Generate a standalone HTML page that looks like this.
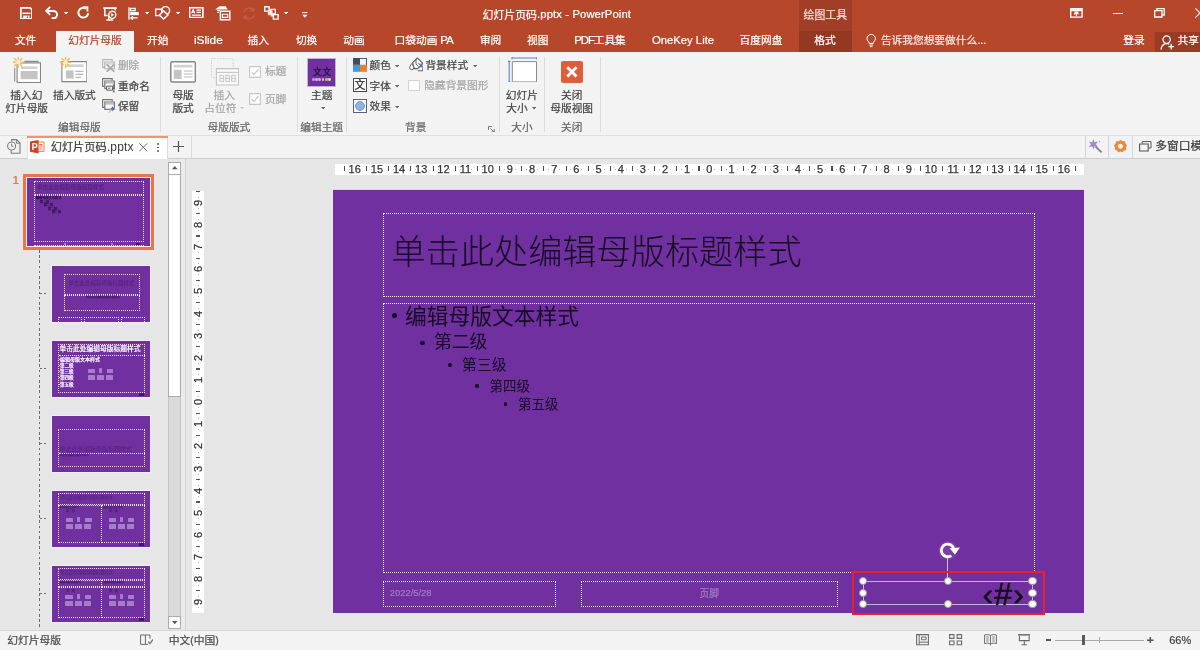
<!DOCTYPE html>
<html lang="zh-CN"><head><meta charset="utf-8"><title>幻灯片页码.pptx - PowerPoint</title>
<style>
*{box-sizing:border-box;margin:0;padding:0}
html,body{width:1200px;height:650px;overflow:hidden;background:#E6E6E6}
body{position:relative;font-family:"Liberation Sans","Noto Sans CJK SC",sans-serif;font-size:10.7px;color:#444}
div,svg.ic{position:absolute}
main{position:absolute;left:0;top:0;width:1200px;height:650px;overflow:hidden;will-change:transform}
.t{white-space:nowrap;line-height:1;height:1em;-webkit-text-stroke:.22px currentColor}
.t.c{transform:translateX(-50%)}
.sep{width:1px;background:#DCDCDC}
.dot{border:1px dotted #fff}

.rh,.rv{overflow:hidden;font-size:11px;color:#333;line-height:1;-webkit-text-stroke:.25px #333}
.rh span{position:absolute;top:.6px;transform:translateX(-50%)}
.rh b{position:absolute;top:2.9px;width:1.2px;height:5px;background:#4a4a4a}
.rh u{position:absolute;top:5.4px;width:1px;height:1px;background:#b4b4b4}
.rv span{position:absolute;left:5.9px;transform:translate(-50%,-50%) rotate(-90deg)}
.rv b{position:absolute;left:4.2px;height:1.2px;width:3.2px;background:#555}
.rv u{position:absolute;left:5.4px;width:1px;height:1px;background:#b4b4b4}
</style></head>
<body>
<main>
<div style="position:absolute;left:0px;top:0px;width:1200px;height:52px;background:#B7472A"></div>
<div style="position:absolute;left:799px;top:0px;width:53px;height:31px;background:#A03E27"></div>
<div style="position:absolute;left:799px;top:31px;width:53px;height:21px;background:#943821"></div>
<div style="position:absolute;left:1155px;top:31.5px;width:45px;height:20px;background:#9A3B25"></div>
<div style="position:absolute;left:56px;top:31px;width:78px;height:21.5px;background:#F3F3F3"></div>
<svg class="ic" style="left:19.6px;top:6.6px;" width="12.8" height="12.8" viewBox="0 0 12.8 12.8"><path d="M.9.9H10.2L11.9 2.6V11.9H.9Z" fill="none" stroke="#fff" stroke-width="1.7"/><path d="M2.4 6.3H10.4" stroke="#fff" stroke-width="1.5"/><path d="M3.2 8.6H9.6V11.9H3.2Z" fill="#fff"/><path d="M6.9 9.4H8.2V11H6.9Z" fill="#B7472A"/></svg>
<svg class="ic" style="left:44.6px;top:6.2px;" width="14.4" height="13" viewBox="0 0 14.4 13"><path d="M5.2 .9L1.2 4.9L5.2 8.9" fill="none" stroke="#fff" stroke-width="2"/><path d="M1.8 4.9H8.4A3.7 3.7 0 0 1 8.4 12.3H6.6" fill="none" stroke="#fff" stroke-width="2"/></svg>
<svg class="ic" style="left:64px;top:11.8px;" width="4.2" height="2.6" viewBox="0 0 4.2 2.6"><path d="M0 0H4.2L2.1 2.6Z" fill="#fff"/></svg>
<svg class="ic" style="left:76.6px;top:6.2px;" width="13" height="13.4" viewBox="0 0 13 13.4"><path d="M9 2.6A4.9 4.9 0 1 0 11.2 7.2" fill="none" stroke="#fff" stroke-width="2"/><path d="M5.8 1.2H10.4V5.6" fill="none" stroke="#fff" stroke-width="1.9"/></svg>
<svg class="ic" style="left:102.5px;top:6.5px;" width="14" height="14" viewBox="0 0 14 14"><path d="M.3 1.1H13.7" stroke="#fff" stroke-width="1.8"/><path d="M1.8 1.5V8.6H4.6M12.2 1.5V3.6" fill="none" stroke="#fff" stroke-width="1.5"/><circle cx="9.3" cy="7.8" r="3.6" fill="none" stroke="#fff" stroke-width="1.35"/><path d="M8.2 5.9L11.2 7.8L8.2 9.7Z" fill="#fff"/><path d="M5.7 8.7V12.6M3.4 13H10.2" stroke="#fff" stroke-width="1.35"/></svg>
<svg class="ic" style="left:127.5px;top:6.5px;" width="11.5" height="13" viewBox="0 0 11.5 13"><path d="M1 .3V12.8" stroke="#fff" stroke-width="1.3"/><path d="M2.6 1.4H7.2V3.6H2.6Z" fill="none" stroke="#fff" stroke-width="1.3"/><path d="M2.2 5H10.8V8.2H2.2Z" fill="#fff"/><path d="M4.9 9.2L2.9 10.9L4.9 12.6M3 10.9H9.6" fill="none" stroke="#fff" stroke-width="1.35"/></svg>
<svg class="ic" style="left:145px;top:11.8px;" width="4.2" height="2.6" viewBox="0 0 4.2 2.6"><path d="M0 0H4.2L2.1 2.6Z" fill="#fff"/></svg>
<svg class="ic" style="left:155px;top:6px;" width="15.5" height="13.5" viewBox="0 0 15.5 13.5"><path d="M.6 3.2H7V9.6H.6Z" fill="none" stroke="#fff" stroke-width="1.45"/><circle cx="10.6" cy="4.6" r="4" fill="none" stroke="#fff" stroke-width="1.45"/><path d="M8.6 4.9L13 9L8.6 13L4.3 9Z" fill="#B7472A" stroke="#fff" stroke-width="1.45"/></svg>
<svg class="ic" style="left:176px;top:11.8px;" width="4.2" height="2.6" viewBox="0 0 4.2 2.6"><path d="M0 0H4.2L2.1 2.6Z" fill="#fff"/></svg>
<svg class="ic" style="left:189px;top:7.3px;" width="14.5" height="11.2" viewBox="0 0 14.5 11.2"><path d="M.6.6H13.9V10.6H.6Z" fill="none" stroke="#fff" stroke-width="1.6"/><path d="M2.6 6.4L4.2 2.5L5.8 6.4M3.2 5.1H5.2M7.4 3.2H12M7.4 5.4H12M2.8 8.2H12" fill="none" stroke="#fff" stroke-width="1.15"/></svg>
<svg class="ic" style="left:215px;top:6px;" width="15.5" height="14.5" viewBox="0 0 15.5 14.5"><path d="M.2 3.4L4.4 .3H10.6L12.6 3.4Z" fill="#fff"/><path d="M2 4.6H5.2M2 6.2H4" stroke="#fff" stroke-width="1"/><path d="M5.4 5.2H14.8V13.8H5.4Z" fill="#B7472A" stroke="#fff" stroke-width="1.5"/><path d="M7.4 8.2H12.8V11.4H7.4Z" fill="none" stroke="#fff" stroke-width="1.1"/></svg>
<svg class="ic" style="left:241px;top:6px;" width="16" height="15" viewBox="0 0 16 15"><g fill="none" stroke="#fff" stroke-width="1.3" opacity=".13"><path d="M3 6A5.2 5.2 0 0 1 12.4 4.4M13 9A5.2 5.2 0 0 1 3.6 10.6"/><path d="M12.8 1.4V4.8H9.6M3.2 13.6V10.2H6.4"/></g></svg>
<svg class="ic" style="left:264px;top:5.8px;" width="14.8" height="13.8" viewBox="0 0 14.8 13.8"><path d="M.7.7H5.1V5.1H.7Z" fill="none" stroke="#fff" stroke-width="1.4"/><path d="M3.8 4.4H8.6V9.2H3.8Z" fill="#F3D9D0"/><path d="M6.9 3.3H11.3V7.7H6.9Z" fill="none" stroke="#fff" stroke-width="1.3"/><path d="M6.6 7.2H10.2V10.6H6.6Z" fill="#F3D9D0"/><path d="M9.4 8.6H14.1V13.1H9.4Z" fill="#B7472A" stroke="#fff" stroke-width="1.4"/></svg>
<svg class="ic" style="left:284px;top:11.8px;" width="4.2" height="2.6" viewBox="0 0 4.2 2.6"><path d="M0 0H4.2L2.1 2.6Z" fill="#fff"/></svg>
<svg class="ic" style="left:302.3px;top:11.6px;" width="5.6" height="6.2" viewBox="0 0 5.6 6.2"><path d="M.2 .6H5.4" stroke="#fff" stroke-width="1.1"/><path d="M.2 2.8H5.4L2.8 5.8Z" fill="#fff"/></svg>
<svg class="ic" style="left:1070px;top:8px;" width="12.8" height="9.8" viewBox="0 0 12.8 9.8"><path d="M.7.7H12.1V9.1H.7Z" fill="none" stroke="#fff" stroke-width="1.4"/><path d="M.7 2.2H12.1" stroke="#fff" stroke-width="2"/><path d="M6.4 8.2V4.6M4.2 6.3L6.4 4.2L8.6 6.3M4.4 4.1H8.4" fill="none" stroke="#fff" stroke-width="1.2"/></svg>
<div style="position:absolute;left:1113px;top:12.6px;width:9.5px;height:1.2px;background:#fff"></div>
<svg class="ic" style="left:1153.5px;top:8.2px;" width="11" height="9.6" viewBox="0 0 11 9.6"><path d="M2.9 2.3V.7H10.2V7H8.2" fill="none" stroke="#fff" stroke-width="1.3"/><path d="M.7 2.7H8V9H.7Z" fill="none" stroke="#fff" stroke-width="1.3"/></svg>
<svg class="ic" style="left:1195px;top:8.4px;" width="10" height="10" viewBox="0 0 10 10"><path d="M.4.4L9.6 9.6M9.6.4L.4 9.6" stroke="#fff" stroke-width="1.2"/></svg>
<div class="t" style="left:482.5px;top:9.5px;font-size:10.9px;color:#fff;">幻灯片页码</div>
<div class="t" style="left:537.0px;top:8.62px;font-size:11.2px;color:#fff;letter-spacing:0.15px;">.pptx - PowerPoint</div>
<div class="t" style="left:803.6px;top:10.0px;font-size:10.85px;color:#F7DED6;">绘图工具</div>
<div class="t" style="left:14.9px;top:35.1px;font-size:10.7px;color:#fff;">文件</div>
<div class="t" style="left:147.1px;top:35.1px;font-size:10.7px;color:#fff;">开始</div>
<div class="t" style="left:247.6px;top:35.1px;font-size:10.7px;color:#fff;">插入</div>
<div class="t" style="left:295.9px;top:35.1px;font-size:10.7px;color:#fff;">切换</div>
<div class="t" style="left:343.3px;top:35.1px;font-size:10.7px;color:#fff;">动画</div>
<div class="t" style="left:479.9px;top:35.1px;font-size:10.7px;color:#fff;">审阅</div>
<div class="t" style="left:527.1px;top:35.1px;font-size:10.7px;color:#fff;">视图</div>
<div class="t" style="left:739.6px;top:35.1px;font-size:10.7px;color:#fff;">百度网盘</div>
<div class="t" style="left:814.3px;top:35.1px;font-size:10.7px;color:#fff;">格式</div>
<div class="t" style="left:1123.3px;top:35.1px;font-size:10.7px;color:#fff;">登录</div>
<div class="t" style="left:1177.6px;top:35.1px;font-size:10.7px;color:#fff;">共享</div>
<div class="t" style="left:68.3px;top:35.1px;font-size:10.7px;color:#B7472A;">幻灯片母版</div>
<div class="t" style="left:194.0px;top:34.51px;font-size:11.8px;color:#fff;letter-spacing:-0.03px;">iSlide</div>
<div class="t" style="left:394.6px;top:35.1px;font-size:10.7px;color:#fff;">口袋动画</div>
<div class="t" style="left:440.2px;top:34.63px;font-size:11.3px;color:#fff;letter-spacing:-0.64px;">PA</div>
<div class="t" style="left:574.2px;top:34.63px;font-size:11.3px;color:#fff;letter-spacing:-0.90px;">PDF</div>
<div class="t" style="left:593.7px;top:35.1px;font-size:10.7px;color:#fff;">工具集</div>
<div class="t" style="left:651.9px;top:34.63px;font-size:11.3px;color:#fff;letter-spacing:0.00px;">OneKey Lite</div>
<svg class="ic" style="left:865.5px;top:34.4px;" width="10.4" height="13.4" viewBox="0 0 10.4 13.4"><path d="M3.1 9.4C3.1 7.6 1 6.9 1 4.6A4.2 4.2 0 0 1 9.4 4.6C9.4 6.9 7.3 7.6 7.3 9.4Z" fill="none" stroke="#fff" stroke-width="1"/><path d="M3.4 11H7M3.9 12.6H6.5" stroke="#fff" stroke-width="1"/></svg>
<div class="t" style="left:880.9px;top:35.1px;font-size:10.7px;color:#FBE9E3;">告诉我您想要做什么</div>
<div class="t" style="left:977.4px;top:35.34px;font-size:10.7px;color:#FBE9E3;">...</div>
<svg class="ic" style="left:1159.5px;top:34.6px;" width="14.5" height="15" viewBox="0 0 14.5 15"><circle cx="6.6" cy="4.6" r="3.7" fill="none" stroke="#fff" stroke-width="1.2"/><path d="M.9 14.6C1.6 10.6 4 8.6 6.6 8.6C7.6 8.6 8.4 8.8 9.2 9.3" fill="none" stroke="#fff" stroke-width="1.2"/><path d="M11.2 8.8V14.4M8.4 11.6H14" stroke="#fff" stroke-width="1.3"/></svg>
<div style="position:absolute;left:0px;top:52px;width:1200px;height:84px;background:#F3F3F3"></div>
<div style="position:absolute;left:56px;top:52px;width:78px;height:1px;background:#F3F3F3"></div>
<div style="position:absolute;left:0px;top:135px;width:1200px;height:1.4px;background:#E0E0E0"></div>
<div class="sep" style="position:absolute;left:159.8px;top:57px;width:1px;height:75px;"></div>
<div class="sep" style="position:absolute;left:297.0px;top:57px;width:1px;height:75px;"></div>
<div class="sep" style="position:absolute;left:346.2px;top:57px;width:1px;height:75px;"></div>
<div class="sep" style="position:absolute;left:498.7px;top:57px;width:1px;height:75px;"></div>
<div class="sep" style="position:absolute;left:544.2px;top:57px;width:1px;height:75px;"></div>
<div class="sep" style="position:absolute;left:599.5px;top:57px;width:1px;height:75px;"></div>
<svg class="ic" style="left:12.5px;top:57px;" width="28" height="26" viewBox="0 0 28 26"><path d="M1.7 11V24.6M11.4 4.4H25.6" fill="none" stroke="#8E8E8E" stroke-width="1.1"/><path d="M4.1 5.9H27.5V25.5H4.1Z" fill="#fff" stroke="#858585" stroke-width="1.1"/><path d="M8 9.4H24.6V12H8Z" fill="#D2D2D2"/><path d="M7.6 14H24.6V22.2H7.6Z" fill="#C4C4C4"/><g stroke="#EDBE5C" stroke-width="1.35" stroke-linecap="round"><path d="M5.2 0V10.4M0 5.2H10.4M1.5 1.5L8.9 8.9M8.9 1.5L1.5 8.9"/></g><circle cx="5.2" cy="5.2" r="2.3" fill="#FCEDC4"/></svg>
<div class="t c" style="left:26.3px;top:90.3px;font-size:10.7px;color:#444;">插入幻</div>
<div class="t c" style="left:26.7px;top:102.8px;font-size:10.7px;color:#444;">灯片母版</div>
<svg class="ic" style="left:58.6px;top:57px;" width="28.4" height="26" viewBox="0 0 28.4 26"><path d="M2.9 4.6H27.9V24.6H2.9Z" fill="#fff" stroke="#858585" stroke-width="1.1"/><path d="M7.4 7.4H24.6V10H7.4Z" fill="#D2D2D2"/><path d="M6.9 13.4H14.6V21.6H6.9Z" fill="#C4C4C4"/><path d="M16.4 14.4H24.6M16.4 17.4H24.6M16.4 20.4H22" stroke="#B8B8B8" stroke-width="1.2"/><g transform="translate(1.4 0)"><g stroke="#EDBE5C" stroke-width="1.35" stroke-linecap="round"><path d="M5.2 0V10.4M0 5.2H10.4M1.5 1.5L8.9 8.9M8.9 1.5L1.5 8.9"/></g><circle cx="5.2" cy="5.2" r="2.3" fill="#FCEDC4"/></g></svg>
<div class="t c" style="left:74.4px;top:90.3px;font-size:10.7px;color:#444;">插入版式</div>
<svg class="ic" style="left:102px;top:58.6px;" width="14" height="13.4" viewBox="0 0 14 13.4"><path d="M.6.6H10.2V2.4M.6.6V8.4H2.8" fill="none" stroke="#B4B4B4" stroke-width="1.15"/><path d="M2.8 3H12.4V9.8H2.8Z" fill="#F5F5F5" stroke="#B4B4B4" stroke-width="1.15"/><path d="M3.2 4.9H12" stroke="#C4C4C4" stroke-width=".9"/><path d="M4.6 5.4L12.4 12.8M12.4 5.4L4.6 12.8" stroke="#A9A9A9" stroke-width="1.7"/></svg>
<div class="t" style="left:117.9px;top:60.3px;font-size:10.7px;color:#A6A6A6;">删除</div>
<svg class="ic" style="left:102px;top:78px;" width="14" height="14.8" viewBox="0 0 14 14.8"><path d="M.6.6H10.2V2.4M.6.6V8.4H2.8" fill="none" stroke="#757575" stroke-width="1.15"/><path d="M2.8 3H12.4V10.4H2.8Z" fill="#F7F7F7" stroke="#757575" stroke-width="1.15"/><path d="M3.2 4.9H12" stroke="#8E8E8E" stroke-width=".9"/><path d="M4.6 8.2H10.6V12.2H4.6Z" fill="#F7F7F7" stroke="#5A5A5A" stroke-width="1"/><path d="M6 10.2H8.4M11.8 7V13.8M10.8 7H12.8M10.8 13.8H12.8" stroke="#5A5A5A" stroke-width=".9"/></svg>
<div class="t" style="left:117.9px;top:80.8px;font-size:10.7px;color:#444;">重命名</div>
<svg class="ic" style="left:102px;top:99.4px;" width="14.5" height="14.4" viewBox="0 0 14.5 14.4"><path d="M.6.6H10.2V2.4M.6.6V8.4H2.8" fill="none" stroke="#757575" stroke-width="1.15"/><path d="M2.8 3H12.4V10.4H2.8Z" fill="#F7F7F7" stroke="#757575" stroke-width="1.15"/><path d="M3.2 4.9H12" stroke="#8E8E8E" stroke-width=".9"/><path d="M10.4 7L13.6 10.2L12.2 10.6L10.4 12.4L9.8 11.2L7 14L6.4 13.4L9.2 10.6L8 10L9.8 8.2Z" fill="#4A72B0" stroke="#F3F3F3" stroke-width=".5"/></svg>
<div class="t" style="left:117.9px;top:101.2px;font-size:10.7px;color:#444;">保留</div>
<div class="t c" style="left:79.4px;top:121.7px;font-size:10.7px;color:#666;">编辑母版</div>
<svg class="ic" style="left:170px;top:60.8px;" width="26.2" height="21.8" viewBox="0 0 26.2 21.8"><rect x=".8" y=".8" width="24.6" height="20.2" rx="1.6" fill="#fff" stroke="#878787" stroke-width="1.5"/><path d="M3.8 3.8H22.6V6.4H3.8Z" fill="#D0D0D0"/><path d="M3.8 8.8H11.6V18H3.8Z" fill="#C4C4C4"/><path d="M13.8 10H22.6M13.8 13H22.6M13.8 16H22.6" stroke="#B6B6B6" stroke-width="1.2"/></svg>
<div class="t c" style="left:183.1px;top:89.7px;font-size:10.7px;color:#444;">母版</div>
<div class="t c" style="left:183.1px;top:102.6px;font-size:10.7px;color:#444;">版式</div>
<svg class="ic" style="left:210.5px;top:58px;" width="28.2" height="27.6" viewBox="0 0 28.2 27.6"><path d="M.6.6H22.2V19.6H.6Z" fill="none" stroke="#CFCFCF" stroke-width="1" stroke-dasharray="1.6 1.2"/><path d="M5.4 10.6H27.6V27H5.4Z" fill="#F7F7F7" stroke="#C3C3C3" stroke-width="1.1"/><path d="M5.4 14.4H27.6" stroke="#C3C3C3" stroke-width="1"/><g fill="none" stroke="#C6C6C6" stroke-width="1"><path d="M9 17.4H12.6V23.4H9ZM14.8 17.4H18.4V23.4H14.8ZM20.6 17.4H24.2V23.4H20.6Z"/><path d="M9 20.4H12.6M14.8 20.4H18.4M20.6 20.4H24.2"/></g></svg>
<div class="t c" style="left:224.2px;top:90.3px;font-size:10.7px;color:#A6A6A6;">插入</div>
<div class="t" style="left:204.3px;top:102.8px;font-size:10.7px;color:#A6A6A6;">占位符</div>
<svg class="ic" style="left:239.8px;top:107.2px;" width="4.2" height="2.5" viewBox="0 0 4.2 2.5"><path d="M0 0H4.2L2.1 2.5Z" fill="#CACACA"/></svg>
<svg class="ic" style="left:249px;top:65.7px;" width="12" height="12" viewBox="0 0 12 12"><path d="M.6.6H11.4V11.4H.6Z" fill="#FDFDFD" stroke="#C6C6C6" stroke-width="1.1"/><path d="M2.8 6.2L5 8.6L9.4 3.2" fill="none" stroke="#C9C9C9" stroke-width="1.3"/></svg>
<div class="t" style="left:264.9px;top:66.2px;font-size:10.7px;color:#A6A6A6;">标题</div>
<svg class="ic" style="left:249px;top:93.4px;" width="12" height="12" viewBox="0 0 12 12"><path d="M.6.6H11.4V11.4H.6Z" fill="#FDFDFD" stroke="#C6C6C6" stroke-width="1.1"/><path d="M2.8 6.2L5 8.6L9.4 3.2" fill="none" stroke="#C9C9C9" stroke-width="1.3"/></svg>
<div class="t" style="left:264.9px;top:93.6px;font-size:10.7px;color:#A6A6A6;">页脚</div>
<div class="t c" style="left:228.9px;top:121.7px;font-size:10.7px;color:#666;">母版版式</div>
<div style="position:absolute;left:307.3px;top:58px;width:28.5px;height:28.5px;background:#7030A0;border:1.3px solid #BDB4D2"></div>
<div class="t" style="left:313.0px;top:67.7px;font-size:8.8px;color:#26103C;">文</div>
<div class="t" style="left:322.4px;top:67.7px;font-size:8.8px;color:#26103C;">文</div>
<div style="position:absolute;left:311.9px;top:78.4px;width:2.7px;height:2.7px;background:#B49AD2;border-radius:50%"></div>
<div style="position:absolute;left:315.15px;top:78.4px;width:2.7px;height:2.7px;background:#C9A8E2;border-radius:50%"></div>
<div style="position:absolute;left:318.4px;top:78.4px;width:2.7px;height:2.7px;background:#D9A0D0;border-radius:50%"></div>
<div style="position:absolute;left:321.65px;top:78.4px;width:2.7px;height:2.7px;background:#F2C94C;border-radius:50%"></div>
<div style="position:absolute;left:324.9px;top:78.4px;width:2.7px;height:2.7px;background:#9CB6E6;border-radius:50%"></div>
<div style="position:absolute;left:328.15px;top:78.4px;width:2.7px;height:2.7px;background:#E4D36A;border-radius:50%"></div>
<div class="t c" style="left:321.7px;top:90.3px;font-size:10.7px;color:#444;">主题</div>
<svg class="ic" style="left:320.8px;top:106.8px;" width="4.2" height="2.5" viewBox="0 0 4.2 2.5"><path d="M0 0H4.2L2.1 2.5Z" fill="#666"/></svg>
<div class="t c" style="left:321.7px;top:121.7px;font-size:10.7px;color:#666;">编辑主题</div>
<svg class="ic" style="left:353px;top:58px;" width="14" height="13.8" viewBox="0 0 14 13.8"><path d="M0 0H14V6.9H0Z" fill="#3F4E60"/><path d="M7 .9H13.1V6.9H7Z" fill="#F1F3F6"/><path d="M0 6.9H7V13.8H0Z" fill="#4596DA"/><path d="M7 6.9H14V13.8H7Z" fill="#ED7D31"/></svg>
<div class="t" style="left:369.6px;top:60.3px;font-size:10.7px;color:#444;">颜色</div>
<svg class="ic" style="left:395px;top:64.8px;" width="4.2" height="2.5" viewBox="0 0 4.2 2.5"><path d="M0 0H4.2L2.1 2.5Z" fill="#666"/></svg>
<div style="position:absolute;left:353px;top:78.3px;width:14px;height:14.2px;background:#fff;border:1.2px solid #4A4A4A"></div>
<div class="t" style="left:354.6px;top:80.1px;font-size:10.8px;color:#222;">文</div>
<div class="t" style="left:369.6px;top:80.8px;font-size:10.7px;color:#444;">字体</div>
<svg class="ic" style="left:395px;top:85.3px;" width="4.2" height="2.5" viewBox="0 0 4.2 2.5"><path d="M0 0H4.2L2.1 2.5Z" fill="#666"/></svg>
<div style="position:absolute;left:353px;top:98.8px;width:14px;height:14.4px;background:#fff;border:1.2px solid #59627A"></div>
<div style="position:absolute;left:355px;top:101px;width:10px;height:10px;background:#8DB4E8;border:1px solid #6F9BD8;border-radius:50%"></div>
<div class="t" style="left:369.6px;top:101.2px;font-size:10.7px;color:#444;">效果</div>
<svg class="ic" style="left:395px;top:105.7px;" width="4.2" height="2.5" viewBox="0 0 4.2 2.5"><path d="M0 0H4.2L2.1 2.5Z" fill="#666"/></svg>
<svg class="ic" style="left:408.5px;top:57.3px;" width="14.6" height="14.6" viewBox="0 0 14.6 14.6"><path d="M3.6 5.6L8.4 1L13.8 6.4L8.6 11.6H5.2Z" fill="#fff" stroke="#5E5E5E" stroke-width="1.15"/><path d="M7 2.4V7.2L9.2 9" fill="none" stroke="#5E5E5E" stroke-width="1"/><path d="M2.7 6.6C1.5 8.4.7 9.6.7 10.7A2 2 0 0 0 4.7 10.7C4.7 9.6 3.9 8.4 2.7 6.6Z" fill="#fff" stroke="#5E5E5E" stroke-width="1"/><path d="M9.4 6.2L12.6 9.4M12.8 6.4V9.6H9.6" fill="none" stroke="#4E73B4" stroke-width="1.2"/><path d="M8.8 13.8H14V9.2" fill="none" stroke="#5E5E5E" stroke-width="1.1"/></svg>
<div class="t" style="left:425.4px;top:60.3px;font-size:10.7px;color:#444;">背景样式</div>
<svg class="ic" style="left:472.5px;top:64.8px;" width="4.2" height="2.5" viewBox="0 0 4.2 2.5"><path d="M0 0H4.2L2.1 2.5Z" fill="#666"/></svg>
<div style="position:absolute;left:408.3px;top:79.6px;width:11.6px;height:11.4px;background:#FDFDFD;border:1px solid #D2D2D2"></div>
<div class="t" style="left:424.3px;top:80.3px;font-size:10.7px;color:#A6A6A6;">隐藏背景图形</div>
<div class="t c" style="left:415.8px;top:121.7px;font-size:10.7px;color:#666;">背景</div>
<svg class="ic" style="left:488.2px;top:125.6px;" width="7" height="6.4" viewBox="0 0 7 6.4"><path d="M.5 4V.5H4M2.4 2.4L6 6M6.2 3V6H3.2" fill="none" stroke="#777" stroke-width="1"/></svg>
<svg class="ic" style="left:507.6px;top:57px;" width="29" height="25.4" viewBox="0 0 29 25.4"><path d="M4.3 4.6H28.5V24.9H4.3Z" fill="#fff" stroke="#8A8A8A" stroke-width="1"/><path d="M4 1H28.8M4 0V2.4M28.8 0V2.4M1.2 4.4V25M0 4.4H2.4M0 25H2.4" stroke="#5B84C8" stroke-width="1.1"/></svg>
<div class="t c" style="left:521.9px;top:90.3px;font-size:10.7px;color:#444;">幻灯片</div>
<div class="t" style="left:506.3px;top:103.0px;font-size:10.7px;color:#444;">大小</div>
<svg class="ic" style="left:531.6px;top:107.4px;" width="4.2" height="2.5" viewBox="0 0 4.2 2.5"><path d="M0 0H4.2L2.1 2.5Z" fill="#666"/></svg>
<div class="t c" style="left:521.9px;top:122.10000000000001px;font-size:10.7px;color:#666;">大小</div>
<div style="position:absolute;left:561.3px;top:61.2px;width:21.4px;height:21.4px;background:#DE5E3B;border-radius:2.2px"></div>
<svg class="ic" style="left:566.2px;top:66.1px;" width="11.8" height="11.8" viewBox="0 0 11.8 11.8"><path d="M1.3 1.3L10.5 10.5M10.5 1.3L1.3 10.5" stroke="#fff" stroke-width="2.9"/></svg>
<div class="t c" style="left:571.7px;top:90.3px;font-size:10.7px;color:#444;">关闭</div>
<div class="t c" style="left:571.7px;top:102.8px;font-size:10.7px;color:#444;">母版视图</div>
<div class="t c" style="left:571.7px;top:122.10000000000001px;font-size:10.7px;color:#666;">关闭</div>
<div style="position:absolute;left:0px;top:136.4px;width:1200px;height:22px;background:#F3F3F3"></div>
<div style="position:absolute;left:0px;top:158px;width:1200px;height:1px;background:#CDCDCD"></div>
<svg class="ic" style="left:7.3px;top:139.4px;" width="13.6" height="14.8" viewBox="0 0 13.6 14.8"><path d="M4.6 2.2V.6H9.6L13 4V14.2H4.2V11.6" fill="none" stroke="#7C7C7C" stroke-width="1.1"/><path d="M9.4.8V4.2H12.8" fill="none" stroke="#7C7C7C" stroke-width="1"/><circle cx="4.6" cy="7" r="4" fill="#F2F2F2" stroke="#7C7C7C" stroke-width="1.1"/><path d="M4.6 4.6V7.2H6.4" fill="none" stroke="#7C7C7C" stroke-width="1"/></svg>
<div style="position:absolute;left:26.5px;top:136px;width:141px;height:22.8px;background:#fff;border-left:1px solid #E2E2E2;border-right:1px solid #DADADA"></div>
<div style="position:absolute;left:26.5px;top:136px;width:141px;height:1.8px;background:#EC966E"></div>
<svg class="ic" style="left:30.3px;top:140.4px;" width="14.6" height="13.4" viewBox="0 0 14.6 13.4"><path d="M7.4 2H14V11.4H7.4Z" fill="#fff" stroke="#E8805C" stroke-width="1"/><path d="M9.2 4.6H12.4M9.2 6.8H12.4M9.2 9H12.4" stroke="#E46A42" stroke-width="1.1"/><path d="M0 1.6L8.6 0V13.4L0 11.8Z" fill="#D04423"/><path d="M2.9 10V3.6H4.9A1.9 1.9 0 0 1 4.9 7.4H3.1" fill="none" stroke="#fff" stroke-width="1.4"/></svg>
<div class="t" style="left:50.7px;top:141.5px;font-size:11.2px;color:#3C3C3C;">幻灯片页码</div>
<div class="t" style="left:106.9px;top:141.24px;font-size:12px;color:#3C3C3C;letter-spacing:0.12px;-webkit-text-stroke:0">.pptx</div>
<svg class="ic" style="left:139px;top:143.2px;" width="8.6" height="8.6" viewBox="0 0 8.6 8.6"><path d="M.4.4L8.2 8.2M8.2.4L.4 8.2" stroke="#6A6A6A" stroke-width="1"/></svg>
<div style="position:absolute;left:157.4px;top:143.4px;width:1.9px;height:1.9px;background:#555;border-radius:50%"></div>
<div style="position:absolute;left:157.4px;top:146.6px;width:1.9px;height:1.9px;background:#555;border-radius:50%"></div>
<div style="position:absolute;left:157.4px;top:149.8px;width:1.9px;height:1.9px;background:#555;border-radius:50%"></div>
<svg class="ic" style="left:173.2px;top:141px;" width="11" height="11" viewBox="0 0 11 11"><path d="M5.5 0V11M0 5.5H11" stroke="#555" stroke-width="1.2"/></svg>
<div style="position:absolute;left:191px;top:136px;width:1px;height:22px;background:#DADADA"></div>
<div style="position:absolute;left:1084.5px;top:136px;width:1px;height:22px;background:#D4D4D4"></div>
<div style="position:absolute;left:1108.2px;top:136px;width:1px;height:22px;background:#D4D4D4"></div>
<div style="position:absolute;left:1132.2px;top:136px;width:1px;height:22px;background:#D4D4D4"></div>
<div style="position:absolute;left:1109.2px;top:136px;width:23px;height:22px;background:#EEF3F9"></div>
<svg class="ic" style="left:1088.4px;top:139.4px;" width="14.6" height="14" viewBox="0 0 14.6 14"><path d="M5.4 0L6.6 3.2L10 2.6L7.8 5.2L10 8L6.6 7.4L5.4 10.6L4.2 7.4L.8 8L3 5.2L.8 2.6L4.2 3.2Z" fill="#A488CC"/><path d="M7.6 7.6L13.6 13.4" stroke="#7E7E8E" stroke-width="1.7"/><circle cx="11.6" cy="2.6" r=".8" fill="#B9A3DA"/></svg>
<svg class="ic" style="left:1113.8px;top:140px;" width="13" height="12.6" viewBox="0 0 13 12.6"><path d="M6.5 0L8.6 1.2L11 1.2L11.6 3.6L13 5.4L12 7.6L12.2 10L9.9 10.8L8.2 12.6L6.5 11.6L4.4 12.5L3 10.6L.8 9.8L1 7.4L0 5.4L1.6 3.6L2 1.2L4.4 1.2Z" fill="#F0883A"/><circle cx="6.5" cy="6.3" r="2.5" fill="#FFF6EC"/></svg>
<svg class="ic" style="left:1139px;top:141.4px;" width="12.6" height="10.6" viewBox="0 0 12.6 10.6"><path d="M3.2 2.6V.6H12V7H9.4" fill="none" stroke="#555" stroke-width="1"/><path d="M.6 3H9.2V10H.6Z" fill="#F2F2F2" stroke="#555" stroke-width="1.1"/></svg>
<div class="t" style="left:1155.2px;top:141.0px;font-size:11.8px;color:#3C3C3C;">多窗口模式</div>
<div class="t" style="left:12.4px;top:174.6px;font-size:11.8px;color:#DD6B3F">1</div>
<div style="position:absolute;left:23.3px;top:174.2px;width:130.4px;height:75.5px;background:#FBEDE6;border:3.1px solid #E8744A"></div>
<div style="position:absolute;left:27px;top:178px;width:123px;height:68.2px;background:#7030A0"></div>
<div style="position:absolute;left:34.2px;top:180.6px;width:109.6px;height:14.8px;border:1px dotted rgba(255,255,255,.86);"></div>
<div style="position:absolute;left:34.2px;top:195.4px;width:109.6px;height:46.2px;border:1px dotted rgba(255,255,255,.86);"></div>
<div style="position:absolute;left:34.2px;top:245.2px;width:109.6px;height:1px;border-top:1px dotted rgba(255,255,255,.9)"></div>
<div class="t" style="left:37px;top:184.8px;font-size:5.6px;color:#3D1A5E;opacity:0.75;-webkit-text-stroke:0;">单击此处编辑母版标题样式</div>
<div class="t" style="left:36px;top:196.6px;font-size:3.2px;color:#2A0F45;opacity:0.9;">编辑母版文本样式</div>
<div class="t" style="left:40px;top:200.6px;font-size:3.0px;color:#2A0F45;opacity:0.8;">第二级</div>
<div class="t" style="left:44px;top:204.2px;font-size:3.0px;color:#2A0F45;opacity:0.8;">第二级</div>
<div class="t" style="left:48px;top:207.6px;font-size:3.0px;color:#2A0F45;opacity:0.8;">第二级</div>
<div class="t" style="left:52px;top:211px;font-size:3.0px;color:#2A0F45;opacity:0.8;">第二级</div>
<div style="position:absolute;left:135.6px;top:242.6px;width:4.4px;height:2.6px;background:#2A0F45;opacity:.7"></div>
<div style="position:absolute;left:64px;top:243px;width:2px;height:1.6px;border:1px solid rgba(255,255,255,.6);border-radius:50%"></div>
<div style="position:absolute;left:111px;top:243px;width:2px;height:1.6px;border:1px solid rgba(255,255,255,.6);border-radius:50%"></div>
<div style="position:absolute;left:39px;top:250px;width:1px;height:380px;background:repeating-linear-gradient(#6E6E6E 0 2.6px,transparent 2.6px 5.2px)"></div>
<div style="position:absolute;left:40px;top:293.3px;width:6.4px;height:1px;background:linear-gradient(90deg,#6E6E6E 0 2.4px,transparent 2.4px 4px,#6E6E6E 4px)"></div>
<div style="position:absolute;left:40px;top:368.3px;width:6.4px;height:1px;background:linear-gradient(90deg,#6E6E6E 0 2.4px,transparent 2.4px 4px,#6E6E6E 4px)"></div>
<div style="position:absolute;left:40px;top:443.3px;width:6.4px;height:1px;background:linear-gradient(90deg,#6E6E6E 0 2.4px,transparent 2.4px 4px,#6E6E6E 4px)"></div>
<div style="position:absolute;left:40px;top:518.3px;width:6.4px;height:1px;background:linear-gradient(90deg,#6E6E6E 0 2.4px,transparent 2.4px 4px,#6E6E6E 4px)"></div>
<div style="position:absolute;left:40px;top:593.3px;width:6.4px;height:1px;background:linear-gradient(90deg,#6E6E6E 0 2.4px,transparent 2.4px 4px,#6E6E6E 4px)"></div>
<div style="position:absolute;left:50.8px;top:265px;width:100px;height:57.6px;background:#7030A0;border:1px solid #F3ECFA"></div>
<div style="position:absolute;left:64.2px;top:274px;width:76.2px;height:21.4px;border:1px dotted rgba(255,255,255,.86);"></div>
<div style="position:absolute;left:64.2px;top:295px;width:76.2px;height:16px;border:1px dotted rgba(255,255,255,.86);"></div>
<div class="t" style="left:68.6px;top:281.4px;font-size:5.5px;color:#3D1A5E;opacity:0.7;-webkit-text-stroke:0;">单击此处编辑母版标题样式</div>
<div class="t" style="left:86px;top:296.8px;font-size:2.6px;color:#3D1A5E;opacity:0.8;">单击此处编辑母版副标题样式</div>
<div style="position:absolute;left:58.3px;top:317px;width:24px;height:5.2px;border:1px dotted rgba(255,255,255,.85);border-bottom:0"></div>
<div style="position:absolute;left:84px;top:317px;width:35px;height:5.2px;border:1px dotted rgba(255,255,255,.85);border-bottom:0"></div>
<div style="position:absolute;left:120.5px;top:317px;width:24.5px;height:5.2px;border:1px dotted rgba(255,255,255,.85);border-bottom:0"></div>
<div style="position:absolute;left:50.8px;top:340px;width:100px;height:57.6px;background:#7030A0;border:1px solid #F3ECFA"></div>
<div style="position:absolute;left:58.2px;top:343.8px;width:86.8px;height:49.2px;border:1px dotted rgba(255,255,255,.86);"></div>
<div style="position:absolute;left:58.6px;top:355.4px;width:86px;height:1px;border-top:1px dotted rgba(255,255,255,.9)"></div>
<div class="t" style="left:59.6px;top:346.1px;font-size:6.75px;color:#fff;opacity:1;">单击此处编辑母版标题样式</div>
<div class="t" style="left:58.4px;top:357px;font-size:5.0px;color:#fff;opacity:1;">·编辑母版文本样式</div>
<div class="t" style="left:58.4px;top:363.6px;font-size:4.6px;color:#fff;opacity:1;">·第二级</div>
<div class="t" style="left:58.4px;top:370.0px;font-size:4.6px;color:#fff;opacity:1;">·第三级</div>
<div class="t" style="left:58.4px;top:376.40000000000003px;font-size:4.6px;color:#fff;opacity:1;">·第四级</div>
<div class="t" style="left:58.4px;top:382.8px;font-size:4.6px;color:#fff;opacity:1;">·第五级</div>
<div style="position:absolute;left:87.6px;top:368.8px;width:7.4px;height:4.2px;background:rgba(200,172,226,.62);border-radius:.6px"></div><div style="position:absolute;left:99.19999999999999px;top:367.59999999999997px;width:2.6px;height:5.6px;background:rgba(200,172,226,.62);border-radius:.6px"></div><div style="position:absolute;left:107.0px;top:369.0px;width:6.4px;height:3.6px;background:rgba(200,172,226,.62);border-radius:.6px"></div><div style="position:absolute;left:87.6px;top:374.8px;width:7.4px;height:5.2px;background:rgba(200,172,226,.62);border-radius:.6px"></div><div style="position:absolute;left:96.89999999999999px;top:374.8px;width:7.4px;height:5.2px;background:rgba(200,172,226,.62);border-radius:.6px"></div><div style="position:absolute;left:106.19999999999999px;top:374.8px;width:6.6px;height:5.2px;background:rgba(200,172,226,.62);border-radius:.6px"></div>
<div style="position:absolute;left:139.4px;top:393.2px;width:4.2px;height:2.4px;background:#2A0F45;opacity:.7"></div>
<div style="position:absolute;left:50.8px;top:415px;width:100px;height:57.6px;background:#7030A0;border:1px solid #F3ECFA"></div>
<div style="position:absolute;left:58.2px;top:429.2px;width:86.8px;height:37.6px;border:1px dotted rgba(255,255,255,.86);"></div>
<div style="position:absolute;left:58.6px;top:453.2px;width:86px;height:1px;border-top:1px dotted rgba(255,255,255,.9)"></div>
<div class="t" style="left:59.6px;top:446.4px;font-size:6.05px;color:#3D1A5E;opacity:0.62;-webkit-text-stroke:0;">单击此处编辑母版标题样式</div>
<div class="t" style="left:60px;top:454.6px;font-size:2.4px;color:#3D1A5E;opacity:0.6;">单击此处编辑母版文本样式</div>
<div style="position:absolute;left:50.8px;top:490px;width:100px;height:57.6px;background:#7030A0;border:1px solid #F3ECFA"></div>
<div style="position:absolute;left:58.2px;top:493.2px;width:86.8px;height:12px;border:1px dotted rgba(255,255,255,.86);"></div>
<div style="position:absolute;left:58.2px;top:505px;width:43.4px;height:37.6px;border:1px dotted rgba(255,255,255,.86);"></div>
<div style="position:absolute;left:101.4px;top:505px;width:43.6px;height:37.6px;border:1px dotted rgba(255,255,255,.86);"></div>
<div class="t" style="left:60.4px;top:496.4px;font-size:4.4px;color:#3D1A5E;opacity:0.7;-webkit-text-stroke:0;">单击此处编辑母版标题样式</div>
<div class="t" style="left:60px;top:506.6px;font-size:2.4px;color:#3D1A5E;opacity:0.6;">编辑母版文本样式</div>
<div class="t" style="left:103.4px;top:506.6px;font-size:2.4px;color:#3D1A5E;opacity:0.6;">编辑母版文本样式</div>
<div class="t" style="left:66px;top:510.4px;font-size:3px;color:#3D1A5E;opacity:0.55;">第二级</div>
<div class="t" style="left:109px;top:510.4px;font-size:3px;color:#3D1A5E;opacity:0.55;">第二级</div>
<div style="position:absolute;left:65.8px;top:517.8000000000001px;width:7.4px;height:4.2px;background:rgba(200,172,226,.62);border-radius:.6px"></div><div style="position:absolute;left:77.39999999999999px;top:516.6px;width:2.6px;height:5.6px;background:rgba(200,172,226,.62);border-radius:.6px"></div><div style="position:absolute;left:85.19999999999999px;top:518.0px;width:6.4px;height:3.6px;background:rgba(200,172,226,.62);border-radius:.6px"></div><div style="position:absolute;left:65.8px;top:523.8000000000001px;width:7.4px;height:5.2px;background:rgba(200,172,226,.62);border-radius:.6px"></div><div style="position:absolute;left:75.1px;top:523.8000000000001px;width:7.4px;height:5.2px;background:rgba(200,172,226,.62);border-radius:.6px"></div><div style="position:absolute;left:84.4px;top:523.8000000000001px;width:6.6px;height:5.2px;background:rgba(200,172,226,.62);border-radius:.6px"></div>
<div style="position:absolute;left:108.6px;top:517.8000000000001px;width:7.4px;height:4.2px;background:rgba(200,172,226,.62);border-radius:.6px"></div><div style="position:absolute;left:120.19999999999999px;top:516.6px;width:2.6px;height:5.6px;background:rgba(200,172,226,.62);border-radius:.6px"></div><div style="position:absolute;left:128.0px;top:518.0px;width:6.4px;height:3.6px;background:rgba(200,172,226,.62);border-radius:.6px"></div><div style="position:absolute;left:108.6px;top:523.8000000000001px;width:7.4px;height:5.2px;background:rgba(200,172,226,.62);border-radius:.6px"></div><div style="position:absolute;left:117.89999999999999px;top:523.8000000000001px;width:7.4px;height:5.2px;background:rgba(200,172,226,.62);border-radius:.6px"></div><div style="position:absolute;left:127.19999999999999px;top:523.8000000000001px;width:6.6px;height:5.2px;background:rgba(200,172,226,.62);border-radius:.6px"></div>
<div style="position:absolute;left:139.4px;top:543.2px;width:4.2px;height:2.4px;background:#2A0F45;opacity:.7"></div>
<div style="position:absolute;left:50.8px;top:565px;width:100px;height:57.6px;background:#7030A0;border:1px solid #F3ECFA"></div>
<div style="position:absolute;left:58.2px;top:567.6px;width:86.8px;height:12.4px;border:1px dotted rgba(255,255,255,.86);"></div>
<div style="position:absolute;left:58.2px;top:580px;width:43.4px;height:7px;border:1px dotted rgba(255,255,255,.86);"></div>
<div style="position:absolute;left:101.4px;top:580px;width:43.6px;height:7px;border:1px dotted rgba(255,255,255,.86);"></div>
<div style="position:absolute;left:58.2px;top:587px;width:43.4px;height:30.6px;border:1px dotted rgba(255,255,255,.86);"></div>
<div style="position:absolute;left:101.4px;top:587px;width:43.6px;height:30.6px;border:1px dotted rgba(255,255,255,.86);"></div>
<div class="t" style="left:60.4px;top:571px;font-size:4.4px;color:#3D1A5E;opacity:0.7;-webkit-text-stroke:0;">单击此处编辑母版标题样式</div>
<div class="t" style="left:60px;top:581.6px;font-size:2.6px;color:#3D1A5E;opacity:0.7;">编辑母版文本样式</div>
<div class="t" style="left:103.4px;top:581.6px;font-size:2.6px;color:#3D1A5E;opacity:0.7;">编辑母版文本样式</div>
<div class="t" style="left:66px;top:589.6px;font-size:3px;color:#3D1A5E;opacity:0.55;">第二级</div>
<div class="t" style="left:109px;top:589.6px;font-size:3px;color:#3D1A5E;opacity:0.55;">第二级</div>
<div style="position:absolute;left:65.4px;top:595.0px;width:7.4px;height:4.2px;background:rgba(200,172,226,.62);border-radius:.6px"></div><div style="position:absolute;left:77.0px;top:593.8px;width:2.6px;height:5.6px;background:rgba(200,172,226,.62);border-radius:.6px"></div><div style="position:absolute;left:84.80000000000001px;top:595.1999999999999px;width:6.4px;height:3.6px;background:rgba(200,172,226,.62);border-radius:.6px"></div><div style="position:absolute;left:65.4px;top:601.0px;width:7.4px;height:5.2px;background:rgba(200,172,226,.62);border-radius:.6px"></div><div style="position:absolute;left:74.7px;top:601.0px;width:7.4px;height:5.2px;background:rgba(200,172,226,.62);border-radius:.6px"></div><div style="position:absolute;left:84.0px;top:601.0px;width:6.6px;height:5.2px;background:rgba(200,172,226,.62);border-radius:.6px"></div>
<div style="position:absolute;left:108.6px;top:595.0px;width:7.4px;height:4.2px;background:rgba(200,172,226,.62);border-radius:.6px"></div><div style="position:absolute;left:120.19999999999999px;top:593.8px;width:2.6px;height:5.6px;background:rgba(200,172,226,.62);border-radius:.6px"></div><div style="position:absolute;left:128.0px;top:595.1999999999999px;width:6.4px;height:3.6px;background:rgba(200,172,226,.62);border-radius:.6px"></div><div style="position:absolute;left:108.6px;top:601.0px;width:7.4px;height:5.2px;background:rgba(200,172,226,.62);border-radius:.6px"></div><div style="position:absolute;left:117.89999999999999px;top:601.0px;width:7.4px;height:5.2px;background:rgba(200,172,226,.62);border-radius:.6px"></div><div style="position:absolute;left:127.19999999999999px;top:601.0px;width:6.6px;height:5.2px;background:rgba(200,172,226,.62);border-radius:.6px"></div>
<div style="position:absolute;left:139.4px;top:618.2px;width:4.2px;height:2.4px;background:#2A0F45;opacity:.7"></div>
<div style="position:absolute;left:168.3px;top:161.5px;width:13px;height:467px;background:#DADADA;border:1px solid #C4C4C4"></div>
<div style="position:absolute;left:168.3px;top:174.2px;width:13px;height:222.6px;background:#fff;border:1px solid #ABABAB"></div>
<div style="position:absolute;left:168.3px;top:161.5px;width:13px;height:13.4px;background:#fff;border:1px solid #ABABAB"></div>
<svg class="ic" style="left:172px;top:166.4px;" width="5.6" height="3.2" viewBox="0 0 5.6 3.2"><path d="M0 3.2L2.8 0L5.6 3.2Z" fill="#555"/></svg>
<div style="position:absolute;left:168.3px;top:615.6px;width:13px;height:13px;background:#fff;border:1px solid #ABABAB"></div>
<svg class="ic" style="left:172px;top:620.8px;" width="5.6" height="3.2" viewBox="0 0 5.6 3.2"><path d="M0 0H5.6L2.8 3.2Z" fill="#555"/></svg>
<div style="position:absolute;left:181.4px;top:159px;width:4px;height:471px;background:#EBEBEB"></div>
<div style="position:absolute;left:185.2px;top:159px;width:1px;height:471px;background:#D2D2D2"></div>
<div style="position:absolute;left:335px;top:163.6px;width:748.8px;height:11.9px;background:#fff"></div>
<div class="rh" style="left:335px;top:163.6px;width:748.8px;height:11.9px"><b style="left:8.9px"></b><span style="left:19.7px">16</span><b style="left:31.0px"></b><u style="left:13.8px"></u><u style="left:24.8px"></u><span style="left:41.9px">15</span><b style="left:53.2px"></b><u style="left:36.0px"></u><u style="left:47.0px"></u><span style="left:64.1px">14</span><b style="left:75.3px"></b><u style="left:58.2px"></u><u style="left:69.2px"></u><span style="left:86.2px">13</span><b style="left:97.5px"></b><u style="left:80.3px"></u><u style="left:91.3px"></u><span style="left:108.4px">12</span><b style="left:119.7px"></b><u style="left:102.5px"></u><u style="left:113.5px"></u><span style="left:130.5px">11</span><b style="left:141.8px"></b><u style="left:124.6px"></u><u style="left:135.6px"></u><span style="left:152.7px">10</span><b style="left:164.0px"></b><u style="left:146.8px"></u><u style="left:157.8px"></u><span style="left:174.9px">9</span><b style="left:186.1px"></b><u style="left:169.0px"></u><u style="left:180.0px"></u><span style="left:197.0px">8</span><b style="left:208.3px"></b><u style="left:191.1px"></u><u style="left:202.1px"></u><span style="left:219.2px">7</span><b style="left:230.5px"></b><u style="left:213.3px"></u><u style="left:224.3px"></u><span style="left:241.3px">6</span><b style="left:252.6px"></b><u style="left:235.4px"></u><u style="left:246.4px"></u><span style="left:263.5px">5</span><b style="left:274.8px"></b><u style="left:257.6px"></u><u style="left:268.6px"></u><span style="left:285.7px">4</span><b style="left:296.9px"></b><u style="left:279.8px"></u><u style="left:290.8px"></u><span style="left:307.8px">3</span><b style="left:319.1px"></b><u style="left:301.9px"></u><u style="left:312.9px"></u><span style="left:330.0px">2</span><b style="left:341.3px"></b><u style="left:324.1px"></u><u style="left:335.1px"></u><span style="left:352.1px">1</span><b style="left:363.4px"></b><u style="left:346.2px"></u><u style="left:357.2px"></u><span style="left:374.3px">0</span><b style="left:385.6px"></b><u style="left:368.4px"></u><u style="left:379.4px"></u><span style="left:396.5px">1</span><b style="left:407.7px"></b><u style="left:390.6px"></u><u style="left:401.6px"></u><span style="left:418.6px">2</span><b style="left:429.9px"></b><u style="left:412.7px"></u><u style="left:423.7px"></u><span style="left:440.8px">3</span><b style="left:452.1px"></b><u style="left:434.9px"></u><u style="left:445.9px"></u><span style="left:462.9px">4</span><b style="left:474.2px"></b><u style="left:457.0px"></u><u style="left:468.0px"></u><span style="left:485.1px">5</span><b style="left:496.4px"></b><u style="left:479.2px"></u><u style="left:490.2px"></u><span style="left:507.3px">6</span><b style="left:518.5px"></b><u style="left:501.4px"></u><u style="left:512.4px"></u><span style="left:529.4px">7</span><b style="left:540.7px"></b><u style="left:523.5px"></u><u style="left:534.5px"></u><span style="left:551.6px">8</span><b style="left:562.9px"></b><u style="left:545.7px"></u><u style="left:556.7px"></u><span style="left:573.7px">9</span><b style="left:585.0px"></b><u style="left:567.8px"></u><u style="left:578.8px"></u><span style="left:595.9px">10</span><b style="left:607.2px"></b><u style="left:590.0px"></u><u style="left:601.0px"></u><span style="left:618.1px">11</span><b style="left:629.3px"></b><u style="left:612.2px"></u><u style="left:623.2px"></u><span style="left:640.2px">12</span><b style="left:651.5px"></b><u style="left:634.3px"></u><u style="left:645.3px"></u><span style="left:662.4px">13</span><b style="left:673.7px"></b><u style="left:656.5px"></u><u style="left:667.5px"></u><span style="left:684.5px">14</span><b style="left:695.8px"></b><u style="left:678.6px"></u><u style="left:689.6px"></u><span style="left:706.7px">15</span><b style="left:718.0px"></b><u style="left:700.8px"></u><u style="left:711.8px"></u><span style="left:728.9px">16</span><b style="left:740.1px"></b><u style="left:723.0px"></u><u style="left:734.0px"></u></div>
<div style="position:absolute;left:192.2px;top:191.4px;width:11.8px;height:421.4px;background:#fff"></div>
<div class="rv" style="left:192.2px;top:191.4px;width:11.8px;height:421.4px"><b style="top:-0.2px"></b><span style="top:11.4px">9</span><b style="top:21.9px"></b><u style="top:5.5px"></u><u style="top:16.5px"></u><span style="top:33.5px">8</span><b style="top:44.1px"></b><u style="top:27.6px"></u><u style="top:38.6px"></u><span style="top:55.7px">7</span><b style="top:66.3px"></b><u style="top:49.8px"></u><u style="top:60.8px"></u><span style="top:77.8px">6</span><b style="top:88.4px"></b><u style="top:71.9px"></u><u style="top:82.9px"></u><span style="top:100.0px">5</span><b style="top:110.6px"></b><u style="top:94.1px"></u><u style="top:105.1px"></u><span style="top:122.2px">4</span><b style="top:132.7px"></b><u style="top:116.3px"></u><u style="top:127.3px"></u><span style="top:144.3px">3</span><b style="top:154.9px"></b><u style="top:138.4px"></u><u style="top:149.4px"></u><span style="top:166.5px">2</span><b style="top:177.1px"></b><u style="top:160.6px"></u><u style="top:171.6px"></u><span style="top:188.6px">1</span><b style="top:199.2px"></b><u style="top:182.7px"></u><u style="top:193.7px"></u><span style="top:210.8px">0</span><b style="top:221.4px"></b><u style="top:204.9px"></u><u style="top:215.9px"></u><span style="top:233.0px">1</span><b style="top:243.5px"></b><u style="top:227.1px"></u><u style="top:238.1px"></u><span style="top:255.1px">2</span><b style="top:265.7px"></b><u style="top:249.2px"></u><u style="top:260.2px"></u><span style="top:277.3px">3</span><b style="top:287.9px"></b><u style="top:271.4px"></u><u style="top:282.4px"></u><span style="top:299.4px">4</span><b style="top:310.0px"></b><u style="top:293.5px"></u><u style="top:304.5px"></u><span style="top:321.6px">5</span><b style="top:332.2px"></b><u style="top:315.7px"></u><u style="top:326.7px"></u><span style="top:343.8px">6</span><b style="top:354.3px"></b><u style="top:337.9px"></u><u style="top:348.9px"></u><span style="top:365.9px">7</span><b style="top:376.5px"></b><u style="top:360.0px"></u><u style="top:371.0px"></u><span style="top:388.1px">8</span><b style="top:398.7px"></b><u style="top:382.2px"></u><u style="top:393.2px"></u><span style="top:410.2px">9</span><u style="top:404.3px"></u><u style="top:415.3px"></u></div>
<div style="position:absolute;left:333.3px;top:189.2px;width:751.1px;height:1.2px;background:#E3D3F1"></div>
<div style="position:absolute;left:333.3px;top:190.2px;width:751.1px;height:423.3px;background:#7030A0"></div>
<div class="dot" style="position:absolute;left:383.4px;top:213.2px;width:651.2px;height:83.9px;"></div>
<div class="dot" style="position:absolute;left:383.4px;top:302.6px;width:651.2px;height:270.6px;"></div>
<div class="dot" style="position:absolute;left:383.4px;top:581px;width:172.6px;height:26px;"></div>
<div class="dot" style="position:absolute;left:581.2px;top:581px;width:256.6px;height:26.2px;"></div>
<div class="t" style="left:391.4px;top:234.6px;font-size:34.2px;color:#170A24;font-weight:300;-webkit-text-stroke:0">单击此处编辑母版标题样式</div>
<div style="position:absolute;left:391.9px;top:313.2px;width:5.2px;height:5.2px;background:#170A24;border-radius:50%"></div>
<div class="t" style="left:405.0px;top:306.0px;font-size:21.75px;color:#170A24;-webkit-text-stroke:0">编辑母版文本样式</div>
<div style="position:absolute;left:420.05px;top:340.55px;width:4.5px;height:4.5px;background:#170A24;border-radius:50%"></div>
<div class="t" style="left:434.0px;top:334.3px;font-size:17.8px;color:#170A24;-webkit-text-stroke:0">第二级</div>
<div style="position:absolute;left:448.05px;top:363.25px;width:3.9px;height:3.9px;background:#170A24;border-radius:50%"></div>
<div class="t" style="left:462.1px;top:358.0px;font-size:14.8px;color:#170A24;-webkit-text-stroke:0">第三级</div>
<div style="position:absolute;left:475.45px;top:384.05px;width:3.5px;height:3.5px;background:#170A24;border-radius:50%"></div>
<div class="t" style="left:489.5px;top:379.5px;font-size:13.5px;color:#170A24;-webkit-text-stroke:0">第四级</div>
<div style="position:absolute;left:503.75px;top:402.45px;width:3.5px;height:3.5px;background:#170A24;border-radius:50%"></div>
<div class="t" style="left:518.1px;top:397.6px;font-size:13.5px;color:#170A24;-webkit-text-stroke:0">第五级</div>
<div class="t" style="left:389.8px;top:588.4px;font-size:9.4px;color:#9E7EC2">2022/5/28</div>
<div class="t" style="left:699.6px;top:589.0px;font-size:9.7px;color:#9E7EC2;">页脚</div>
<div style="position:absolute;left:862.8px;top:580.8px;width:169.8px;height:24.2px;border:1.2px solid #C6B6D8"></div>
<div style="position:absolute;left:946.9px;top:558px;width:1.1px;height:23px;background:#D3BEE6"></div>
<div style="position:absolute;left:858.5999999999999px;top:576.9px;width:8.4px;height:8.4px;background:#fff;border:1px solid #9B9B9B;border-radius:50%"></div>
<div style="position:absolute;left:858.5999999999999px;top:588.5999999999999px;width:8.4px;height:8.4px;background:#fff;border:1px solid #9B9B9B;border-radius:50%"></div>
<div style="position:absolute;left:858.5999999999999px;top:600.0999999999999px;width:8.4px;height:8.4px;background:#fff;border:1px solid #9B9B9B;border-radius:50%"></div>
<div style="position:absolute;left:943.5px;top:576.9px;width:8.4px;height:8.4px;background:#fff;border:1px solid #9B9B9B;border-radius:50%"></div>
<div style="position:absolute;left:943.5px;top:600.0999999999999px;width:8.4px;height:8.4px;background:#fff;border:1px solid #9B9B9B;border-radius:50%"></div>
<div style="position:absolute;left:1028.2px;top:576.9px;width:8.4px;height:8.4px;background:#fff;border:1px solid #9B9B9B;border-radius:50%"></div>
<div style="position:absolute;left:1028.2px;top:588.5999999999999px;width:8.4px;height:8.4px;background:#fff;border:1px solid #9B9B9B;border-radius:50%"></div>
<div style="position:absolute;left:1028.2px;top:600.0999999999999px;width:8.4px;height:8.4px;background:#fff;border:1px solid #9B9B9B;border-radius:50%"></div>
<svg class="ic" style="left:939.4px;top:541.4px;overflow:visible" width="23" height="19" viewBox="0 0 23 19"><circle cx="8.7" cy="9.4" r="9.6" fill="rgba(255,255,255,.07)"/><path d="M12.3 14.6A6.3 6.3 0 1 1 14.9 8.3" fill="none" stroke="#fff" stroke-width="2.9"/><path d="M10.6 7.3L21 6.5L16 13.4Z" fill="#fff"/></svg>
<div class="t" style="left:982.6px;top:577.8px;font-size:32px;color:#141018;letter-spacing:1.1px;-webkit-text-stroke:.55px #141018">&#8249;#&#8250;</div>
<div style="position:absolute;left:852.4px;top:571.4px;width:192.6px;height:43.8px;border:2.6px solid #E8222C"></div>
<div style="position:absolute;left:0px;top:629.6px;width:1200px;height:21px;background:#F3F3F3;border-top:1px solid #D6D6D6"></div>
<div class="t" style="left:7.2px;top:634.7px;font-size:10.75px;color:#4A4A4A;">幻灯片母版</div>
<svg class="ic" style="left:139.6px;top:633.8px;" width="13.6" height="11.6" viewBox="0 0 13.6 11.6"><path d="M.6 1H5.4V10.4H.6ZM5.4 1H10V4.6" fill="none" stroke="#6A6A6A" stroke-width="1"/><path d="M5.4 10.4H8" stroke="#6A6A6A" stroke-width="1"/><path d="M8.2 7.6L10 9.6L13 5.4" fill="none" stroke="#6A6A6A" stroke-width="1.2"/></svg>
<div class="t" style="left:168.8px;top:634.7px;font-size:10.75px;color:#4A4A4A;">中文<span style="font-size:10.4px">(</span>中国<span style="font-size:10.4px">)</span></div>
<svg class="ic" style="left:916px;top:634.4px;" width="13" height="11.4" viewBox="0 0 13 11.4"><path d="M.6.6H12.4V10.8H.6Z" fill="none" stroke="#6A6A6A" stroke-width="1.1"/><path d="M3.2.6V10.8M3.2 8.2H12.4" stroke="#6A6A6A" stroke-width="1"/><path d="M5.6 3H10V5.8H5.6Z" fill="none" stroke="#6A6A6A" stroke-width="1"/></svg>
<svg class="ic" style="left:949.4px;top:634.4px;" width="13.2" height="11.4" viewBox="0 0 13.2 11.4"><path d="M.6.6H5V4.4H.6ZM8.2.6H12.6V4.4H8.2ZM.6 7H5V10.8H.6ZM8.2 7H12.6V10.8H8.2Z" fill="none" stroke="#6A6A6A" stroke-width="1.1"/></svg>
<svg class="ic" style="left:983.6px;top:634.4px;" width="13" height="11.6" viewBox="0 0 13 11.6"><path d="M6.5 1.4C5 .4 2.6.4.6 1V9.6C2.6 9 5 9 6.5 10C8 9 10.4 9 12.4 9.6V1C10.4.4 8 .4 6.5 1.4ZM6.5 1.4V11.4" fill="none" stroke="#6A6A6A" stroke-width="1"/><path d="M2.2 3H4.8M2.2 5H4.8M2.2 7H4.8M8.2 3H10.8M8.2 5H10.8M8.2 7H10.8" stroke="#6A6A6A" stroke-width=".8"/></svg>
<svg class="ic" style="left:1017.8px;top:634.4px;" width="12.6" height="11.6" viewBox="0 0 12.6 11.6"><path d="M0 .8H12.6" stroke="#6A6A6A" stroke-width="1.5"/><path d="M1.4 1.4V6.6H11.2V1.4" fill="none" stroke="#6A6A6A" stroke-width="1.1"/><path d="M6.3 6.8V10.2M3.6 10.8H9" stroke="#6A6A6A" stroke-width="1.1"/></svg>
<div style="position:absolute;left:1045.5px;top:639.4px;width:5.2px;height:1.5px;background:#555"></div>
<div style="position:absolute;left:1054.5px;top:639.7px;width:89.4px;height:1px;background:#A8A8A8"></div>
<div style="position:absolute;left:1099px;top:637.4px;width:1px;height:5.6px;background:#A8A8A8"></div>
<div style="position:absolute;left:1081.8px;top:634.8px;width:3.4px;height:10.4px;background:#5A5A5A"></div>
<svg class="ic" style="left:1147.3px;top:636.8px;" width="6.6" height="6.6" viewBox="0 0 6.6 6.6"><path d="M3.3 0V6.6M0 3.3H6.6" stroke="#555" stroke-width="1.5"/></svg>
<div class="t" style="left:1169.2px;top:635.2px;font-size:11px;color:#444">66%</div>
</main>
</body></html>
